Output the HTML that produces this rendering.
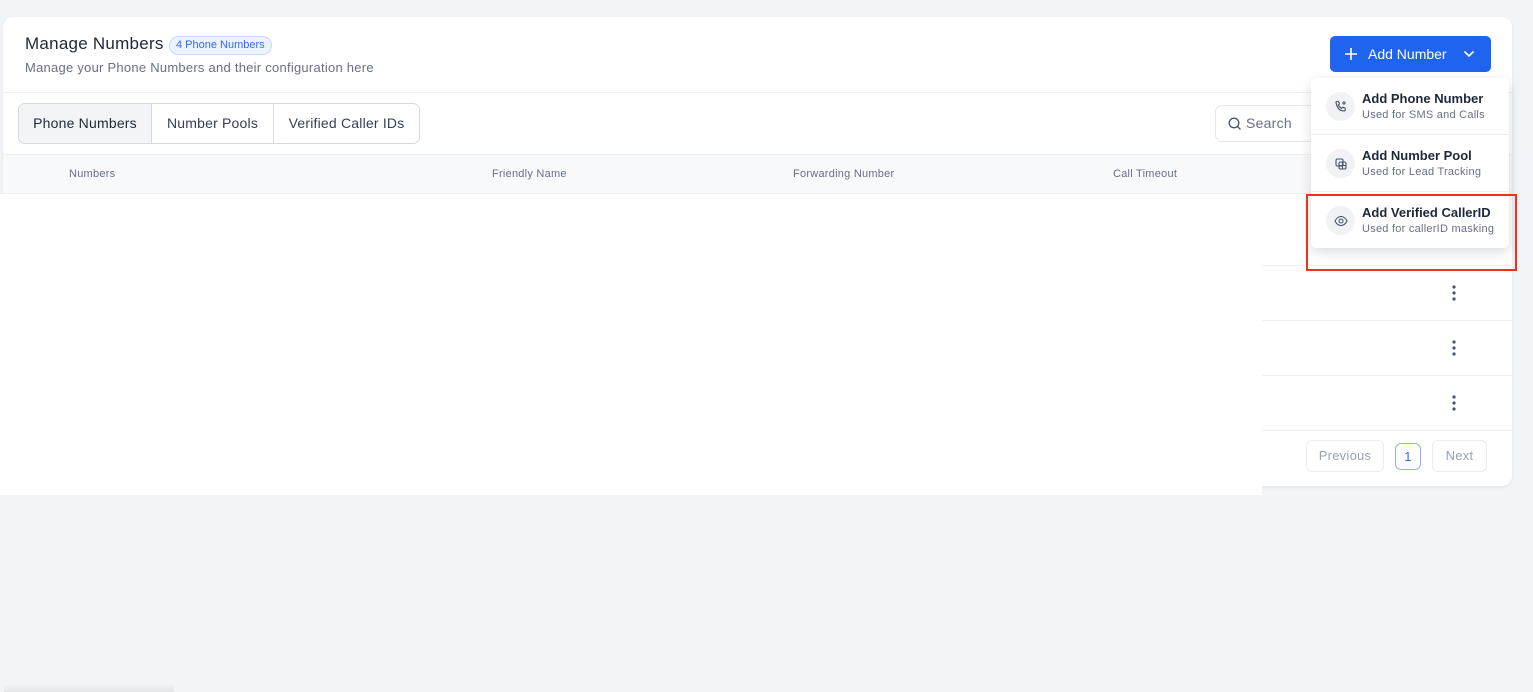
<!DOCTYPE html>
<html><head><meta charset="utf-8"><style>
*{box-sizing:border-box;margin:0;padding:0}
body{width:1533px;height:692px;background:#f1f5f8;font-family:"Liberation Sans",sans-serif;position:relative;overflow:hidden;color:#101828;letter-spacing:.25px}
.card{position:absolute;left:3px;top:17px;width:1509px;height:469px;background:#fff;border-radius:10px;box-shadow:0 1px 3px rgba(16,24,40,.08)}
.abs{position:absolute}
.title{left:25px;top:34px;font-size:17px;color:#1d2939}
.badge{left:169px;top:36px;height:19px;padding:0 6px;border:1px solid #c7d7fe;background:#eef4ff;color:#2f6bf0;border-radius:10px;font-size:11px;line-height:17px}
.sub{left:25px;top:60px;font-size:13px;color:#667085}
.btn{left:1330px;top:36px;width:161px;height:36px;background:#1f64ee;border-radius:5px;color:#fff;font-size:14px}
.hr{height:1px;background:#eef0f3}
.tabs{left:18px;top:103px;height:41px;border:1px solid #d5dae1;border-radius:7px;display:flex;overflow:hidden;font-size:14px;color:#344054}
.tabs div{padding:0;text-align:center;line-height:39px;border-right:1px solid #d5dae1;white-space:nowrap;letter-spacing:.2px}
.tabs div:last-child{border:none}
.search{left:1215px;top:105px;width:120px;height:37px;border:1px solid #e4e7ec;border-radius:7px;font-size:14px;color:#667085;line-height:35px;padding-left:30px}
.th{top:154px;left:3px;width:1509px;height:40px;background:#f8f9fb;border-top:1px solid #eef0f3;border-bottom:1px solid #eef0f3}
.thc{top:168px;font-size:11px;color:#667085}
.pg{height:32px;border:1px solid #e9ecf0;border-radius:6px;font-size:13px;color:#98a2b3;text-align:center;line-height:30px}
.menu{left:1311px;top:78px;width:198px;height:170px;background:#fff;border-radius:5px;box-shadow:0 4px 12px rgba(16,24,40,.15)}
.item{position:absolute;left:0;width:198px;height:57px}
.ic{position:absolute;left:15px;top:14px;width:29px;height:29px;border-radius:50%;background:#f0f2f5;display:flex;align-items:center;justify-content:center}
.it{position:absolute;left:51px;top:13px;font-size:13px;color:#1d2939;font-weight:bold;letter-spacing:0}
.is{position:absolute;left:51px;top:31px;font-size:11px;color:#667085}
</style></head><body>
<div class="card"></div>
<div class="abs title">Manage Numbers</div>
<div class="abs badge" style="letter-spacing:0">4 Phone Numbers</div>
<div class="abs sub">Manage your Phone Numbers and their configuration here</div>
<div class="abs btn">
<svg class="abs" style="left:14px;top:11px" width="14" height="14" viewBox="0 0 14 14"><path d="M7 1v12M1 7h12" stroke="#fff" stroke-width="1.6"/></svg>
<span class="abs" style="left:38px;top:10px;letter-spacing:0">Add Number</span>
<svg class="abs" style="left:133px;top:13px" width="12" height="10" viewBox="0 0 12 10"><path d="M1.5 2.5l4.5 4.5 4.5-4.5" fill="none" stroke="#fff" stroke-width="1.6"/></svg>
</div>
<div class="abs hr" style="left:3px;top:92px;width:1509px"></div>
<div class="abs tabs"><div style="background:#f2f4f7;color:#1d2939;width:133px">Phone Numbers</div><div style="width:122px">Number Pools</div><div style="width:145px">Verified Caller IDs</div></div>
<div class="abs search"><svg class="abs" style="left:12px;top:11px" width="14" height="14" viewBox="0 0 14 14"><circle cx="6" cy="6" r="4.8" fill="none" stroke="#475467" stroke-width="1.3"/><path d="M9.5 9.5l3 3" stroke="#475467" stroke-width="1.3"/></svg>Search</div>
<div class="abs th"></div>
<div class="abs thc" style="left:69px">Numbers</div>
<div class="abs thc" style="left:492px">Friendly Name</div>
<div class="abs thc" style="left:793px">Forwarding Number</div>
<div class="abs thc" style="left:1113px">Call Timeout</div>
<div class="abs hr" style="left:1262px;top:265px;width:250px"></div>
<div class="abs hr" style="left:1262px;top:320px;width:250px"></div>
<div class="abs hr" style="left:1262px;top:375px;width:250px"></div>
<div class="abs hr" style="left:1262px;top:430px;width:250px"></div>
<svg class="abs" style="left:1450px;top:285px" width="8" height="130" viewBox="0 0 8 130"><g fill="#475467"><circle cx="4" cy="2" r="1.6"/><circle cx="4" cy="8" r="1.6"/><circle cx="4" cy="14" r="1.6"/><circle cx="4" cy="57" r="1.6"/><circle cx="4" cy="63" r="1.6"/><circle cx="4" cy="69" r="1.6"/><circle cx="4" cy="112" r="1.6"/><circle cx="4" cy="118" r="1.6"/><circle cx="4" cy="124" r="1.6"/></g></svg>
<div class="abs pg" style="left:1306px;top:440px;width:78px">Previous</div>
<div class="abs pg" style="left:1395px;top:443px;width:26px;height:27px;line-height:25px;border-color:#8fb0f7;color:#2f6bf0">1</div>
<div class="abs pg" style="left:1432px;top:440px;width:55px">Next</div>
<div class="abs" style="left:0;top:194px;width:1262px;height:301px;background:#fff"></div>
<div class="abs" style="left:4px;top:684px;width:170px;height:8px;background:linear-gradient(#f1f5f8,#d8dcdf);opacity:.6"></div>
<div class="abs menu">
<div class="item" style="top:0;border-bottom:1px solid #eef0f3"><div class="ic"><svg width="14" height="14" viewBox="0 0 14 14" fill="none" stroke="#475467" stroke-width="1.1"><path d="M2 2.5c0-.5.5-1 1-1h1.5l1 2.5-1.2 1c.7 1.6 1.8 2.7 3.4 3.4l1-1.2 2.5 1V10c0 .5-.5 1-1 1C6 11 3 8 2 2.5z"/><path d="M10 1v4M8 3h4"/></svg></div><div class="it">Add Phone Number</div><div class="is">Used for SMS and Calls</div></div>
<div class="item" style="top:57px;border-bottom:1px solid #eef0f3"><div class="ic"><svg width="14" height="14" viewBox="0 0 14 14" fill="none" stroke="#475467" stroke-width="1.1"><rect x="2" y="2" width="7" height="7" rx="1.5"/><rect x="5" y="5" width="7" height="7" rx="1.5"/><path d="M8.5 5v7M5 8.5h7"/></svg></div><div class="it">Add Number Pool</div><div class="is">Used for Lead Tracking</div></div>
<div class="item" style="top:114px"><div class="ic"><svg width="14" height="14" viewBox="0 0 14 14" fill="none" stroke="#475467" stroke-width="1.1"><path d="M1 7c1.5-3 3.5-4.5 6-4.5S11.5 4 13 7c-1.5 3-3.5 4.5-6 4.5S2.5 10 1 7z"/><circle cx="7" cy="7" r="2"/></svg></div><div class="it">Add Verified CallerID</div><div class="is">Used for callerID masking</div></div>
</div>
<div class="abs" style="left:1306px;top:194px;width:211px;height:77px;border:2px solid #f2311b"></div>
</body></html>
